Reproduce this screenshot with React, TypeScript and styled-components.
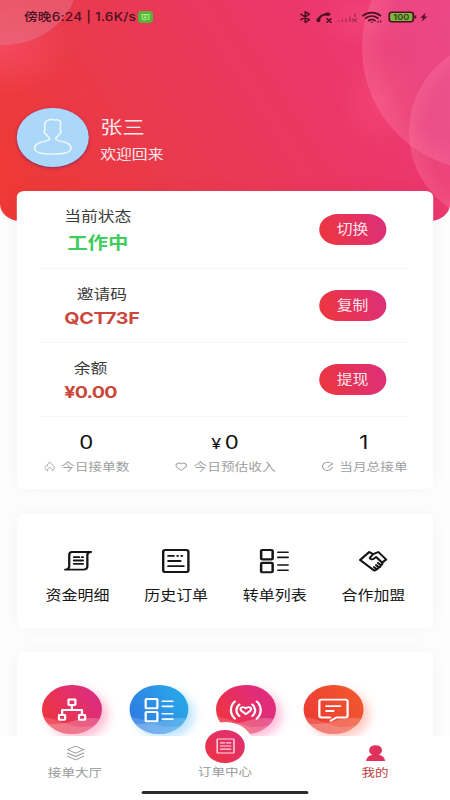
import React from 'react';
import styled, { createGlobalStyle } from 'styled-components';

const GlobalStyle = createGlobalStyle`
  * { box-sizing: border-box; }
  html, body { margin: 0; padding: 0; background: #fdfdfd; overflow: hidden; }
`;

const brand = 'linear-gradient(75deg, #ee363c, #dc2f7c)';

/* The layout is 375 units wide and is stretched to the 450px viewport. */
const Screen = styled.div`
  position: relative;
  width: 375px;
  height: 800px;
  display: grid;
  grid-template-rows: 736px 64px;
  transform: scaleX(1.2);
  transform-origin: 0 0;
  font-family: Inter, 'Noto Sans CJK SC', sans-serif;
  font-weight: 400;
  background: #fdfdfd;
  color: #333;
  overflow: hidden;
  white-space: nowrap;
`;

const Hero = styled.div`
  position: absolute;
  inset: 0 0 auto 0;
  height: 221px;
  border-radius: 0 0 17px 17px;
  overflow: hidden;
  background: linear-gradient(62deg, #ee3936 6%, #e93a4e 36%, #eb3766 66%, #ec397c 100%);
  svg { display: block; width: 100%; height: 100%; }
`;

const Content = styled.main`
  position: relative;
  display: flex;
  flex-direction: column;
  overflow: hidden;
`;

const StatusBar = styled.div`
  flex: none;
  height: 34px;
  padding: 0 18.5px 0 20px;
  display: flex;
  align-items: center;
  justify-content: space-between;
  color: #4d1023;
`;

const StatusGroup = styled.div<{ $gap: number }>`
  display: flex;
  align-items: center;
  gap: ${(p) => p.$gap}px;
  height: 16px;
  font-size: 11.4px;
  letter-spacing: 0.16px;
  font-weight: 500;
  line-height: 16px;
  svg { display: block; flex: none; letter-spacing: 0; }
`;

const Profile = styled.section`
  flex: none;
  height: 157px;
  padding: 74px 14px 0;
  display: flex;
  align-items: flex-start;
  gap: 10px;
  color: #fde8ec;
`;

const Avatar = styled.div`
  width: 59.5px;
  height: 58.5px;
  border-radius: 50%;
  background: #abd7fa;
  box-shadow: 0 1px 3px rgba(80, 40, 110, 0.65);
  svg { display: block; width: 100%; height: 100%; }
`;

const Greeting = styled.div`
  padding-top: 4.5px;
`;
const UserName = styled.div`
  font-size: 18.5px;
  line-height: 28px;
  font-weight: 400;
`;
const Welcome = styled.div`
  font-size: 13.2px;
  line-height: 26px;
  font-weight: 400;
`;

const Card = styled.section<{ $height: number; $gap?: number }>`
  flex: none;
  height: ${(p) => p.$height}px;
  margin: ${(p) => p.$gap ?? 0}px 14px 0;
  border-radius: 6px;
  background: #fff;
  box-shadow: 0 0 17px rgba(0, 0, 0, 0.04);
`;

const InfoRow = styled.div<{ $height: number }>`
  height: ${(p) => p.$height}px;
  margin: 0 21px 0 19px;
  padding: 0 18.5px 0 20.5px;
  border-bottom: 1px solid #f7f7f7;
  display: flex;
  align-items: center;
  justify-content: space-between;
`;

const InfoText = styled.div<{ $gap: number }>`
  display: flex;
  flex-direction: column;
  align-items: center;
  gap: ${(p) => p.$gap}px;
  line-height: 24px;
`;
const InfoLabel = styled.span`
  font-size: 14px;
  font-weight: 400;
  color: #3a3a3a;
`;
const InfoValue = styled.strong<{ $color: string; $size: number; $spacing: number }>`
  font-size: ${(p) => p.$size}px;
  font-weight: 700;
  letter-spacing: ${(p) => p.$spacing}px;
  color: ${(p) => p.$color};
`;

const PillButton = styled.button`
  width: 55.5px;
  height: 31px;
  padding: 0 0 2px;
  border: 0;
  border-radius: 16px;
  background: ${brand};
  color: #ffe4ea;
  font: inherit;
  font-size: 13.2px;
  font-weight: 400;
`;

const Stats = styled.div`
  display: grid;
  grid-template-columns: repeat(3, 1fr);
  padding-top: 13px;
`;
const Stat = styled.div`
  display: flex;
  flex-direction: column;
  align-items: center;
  gap: 2px;
`;
const StatNumber = styled.div`
  font-size: 18.5px;
  line-height: 24px;
  height: 24px;
  color: #111;
  small { font-size: 15px; margin-right: 3px; }
`;
const StatLabel = styled.div`
  display: flex;
  align-items: center;
  gap: 5px;
  height: 20px;
  padding-left: 1px;
  font-size: 11.4px;
  font-weight: 400;
  color: #a0a0a0;
`;

const QuickGrid = styled.div`
  display: grid;
  grid-template-columns: repeat(4, 82.2px);
  padding: 33px 0 0 9.5px;
`;
const QuickItem = styled.div`
  display: flex;
  flex-direction: column;
  align-items: center;
  gap: 10px;
  font-size: 13.3px;
  line-height: 20px;
  color: #151515;
`;

const BubbleGrid = styled.div`
  display: grid;
  grid-template-columns: repeat(4, 72.6px);
  justify-items: center;
  padding: 33px 0 0 9.7px;
`;
const Bubble = styled.div<{ $fill: string; $glow: string }>`
  width: 49.7px;
  height: 49px;
  border-radius: 50%;
  background: ${(p) => p.$fill};
  box-shadow: 5px 5px 9px ${(p) => p.$glow};
  overflow: hidden;
  svg { display: block; }
`;

const NavBar = styled.nav`
  position: relative;
  display: grid;
  grid-template-columns: repeat(3, 1fr);
  background: #fff;
`;
const NavItem = styled.div<{ $active?: boolean }>`
  display: flex;
  flex-direction: column;
  align-items: center;
  gap: 3px;
  padding-top: 8px;
  font-size: 11.3px;
  font-weight: 400;
  line-height: 16px;
  color: ${(p) => (p.$active ? '#c04040' : '#999')};
`;
const NavSpacer = styled.div`
  height: 17px;
`;
const NavBump = styled.div`
  position: absolute;
  top: -14px;
  left: calc(50% - 23px);
  width: 46px;
  height: 46px;
  padding-top: 8px;
  border-radius: 50%;
  background: #fff;
  display: flex;
  justify-content: center;
`;
const NavButton = styled.div`
  width: 32.5px;
  height: 32.5px;
  border-radius: 50%;
  background: linear-gradient(45deg, #ee3340, #dd3078);
  display: flex;
  align-items: center;
  justify-content: center;
`;
const HomeIndicator = styled.div`
  position: absolute;
  bottom: 6px;
  left: 118.3px;
  width: 139px;
  height: 3px;
  border-radius: 2px;
  background: #2c2c2e;
`;

const stroke = {
  fill: 'none',
  stroke: 'currentColor',
  strokeLinecap: 'round' as const,
  strokeLinejoin: 'round' as const,
};

const ChatBadge = () => (
  <svg width="12.5" height="12" viewBox="0 0 12 12" preserveAspectRatio="none">
    <rect width="12" height="12" rx="3.4" fill="#55b53a" />
    <path d="M3.3 3.5h5.4v4.6H6l-1.2 1v-1H3.3zM4.6 5h2.8M4.6 6.5h2.2" fill="none" stroke="#a9ee86" strokeWidth="0.9" />
  </svg>
);

const StatusIcons = () => (
  <svg width="107" height="16" viewBox="0 0 107 16">
    <g {...stroke} strokeWidth="1.4">
      <path d="M.8 5.2l7 5.5-3.4 2.7V2.6l3.4 2.7-7 5.5" />
      <path d="M15.4 11.4c.3-3.7 3.6-6.2 8.5-6.4" strokeWidth="2.2" />
      <path d="M15.4 11.6v-1.2M22.4 5.2h1.4" strokeWidth="3.2" />
      <path d="M22.4 9.8l3.5 3.5m0-3.5l-3.5 3.5" strokeWidth="1.3" />
    </g>
    <g stroke="currentColor" opacity=".42" strokeWidth="1.2">
      <path d="M32.2 13v-1.6M35.2 13v-2.4M38.4 13V9.4M41.6 13V7.4M45.8 8V4M43.2 9.5l4.2 3.6m0-3.6l-4.2 3.6" />
    </g>
    <g {...stroke} strokeWidth="1.6">
      <path d="M52.6 6.6c4.2-4 10.2-4 14.4 0M54.8 9.2c3-2.8 7-2.8 10 0M57.2 11.6c1.6-1.3 3.6-1.3 5.2 0M59.7 13.3h.1" />
      <path d="M65 11.9v1.6M67.2 11.6v1.6" strokeWidth=".9" />
    </g>
    <rect x="74.4" y="3.2" width="20" height="9.6" rx="2.3" fill="#7db443" stroke="currentColor" strokeWidth="1.4" />
    <path d="M96.1 6.5v3" stroke="currentColor" strokeWidth="1.5" />
    <text x="84.4" y="10.8" textAnchor="middle" fontSize="7.6" fontWeight="600" fill="#343c12">100</text>
    <path d="M105 3.8l-4.9 4.9h2.6l-1.4 4 4.9-5.3h-2.6z" fill="currentColor" />
  </svg>
);

const PersonOutline = () => (
  <svg viewBox="0 0 60 58" fill="none" stroke="#edf9f2" strokeWidth="1.4" strokeLinejoin="round">
    <path d="M23.5 14.8c1.7-3.3 5.1-4.2 8.3-3.1 1.7-.8 4.4-.1 5 1.8l-.3 8.2c1.2.5.7 3.8-.9 4-.4 1.8-1.5 3-2.8 3.6l.2 2.2c3.4 2.3 12.1 2 12.5 8.2.4 5.4-8.4 6.3-15.5 6.3s-15.3-.9-15-6.3c.3-6.2 9.1-5.7 12.3-8.2l.1-2.2c-1.6-.9-2.5-2.1-2.8-3.6-1.8-.4-2.2-3.4-.9-4z" />
  </svg>
);

const Flame = () => (
  <svg width="9" height="11" viewBox="0 0 9 11" {...stroke} strokeWidth=".8">
    <path d="M2.5 9.6C-.2 8.6-.1 5.7 1.5 4.5L2.3 5C2.2 3.2 3.5 1.6 4.9 1.3 4.8 3.4 8.4 4 8.3 7c-.1 1.4-.8 2.3-2 2.6C7 7.5 5.3 7.4 4.7 6.2 3.9 7.4 2 7.6 2.5 9.6z" />
  </svg>
);
const HeartOutline = () => (
  <svg width="10" height="11" viewBox="0 0 10 11" {...stroke} strokeWidth=".9">
    <path d="M5 9.5L1.3 6C-.6 3.8 2.6.4 5 3c2.4-2.6 5.6.8 3.7 3z" />
  </svg>
);
const Gauge = () => (
  <svg width="10" height="11" viewBox="0 0 10 11" {...stroke} strokeWidth=".9">
    <path d="M6.3 1.5A4.1 4.1 0 1 0 8.9 6.2M5.4 6l2.6-2.3M7.4 1.9l1.6.2-.3 1.6" />
  </svg>
);

const Scroll = () => (
  <svg width="28" height="28" viewBox="0 0 28 28" {...stroke} strokeWidth="1.9">
    <path d="M24.8 5H9C6.9 5 6.7 6.4 6.7 8.2v10.9c0 2.5-1.1 3.5-3.4 3.5h15.1c2.4 0 3.4-1.4 3.4-3.6V8c0-2 .7-3 3-3z" />
    <path d="M10.6 10.2h4.4m2.3 0h.8M10.6 13.5h7.5M10.6 16.8h7.5" strokeWidth="1.8" />
  </svg>
);
const Orders = () => (
  <svg width="28" height="28" viewBox="0 0 28 28" {...stroke} strokeWidth="2">
    <rect x="3" y="2.9" width="21" height="22.2" rx="1.8" />
    <path d="M7.2 8.9h4.6m3 0h.4m3 0h.6M7.2 14h10.2M7.2 19.2h12.8" strokeWidth="1.8" />
  </svg>
);
const ListBlocks = () => (
  <svg width="28" height="28" viewBox="0 0 28 28" {...stroke} strokeWidth="2.1">
    <rect x="2.6" y="3" width="9.6" height="9.4" rx="1" />
    <rect x="2.6" y="15.9" width="9.6" height="9.4" rx="1" />
    <path d="M16.6 5.3h8.4M16.6 10.4h8.4M16.6 18h8.4M16.6 23.2h8.4" strokeWidth="1.6" />
  </svg>
);
const Handshake = () => (
  <svg width="28" height="28" viewBox="0 0 28 28" {...stroke} strokeWidth="1.9">
    <path d="M14 7.2L10.7 5 3.1 13l11.4 10.2c1 .8 2.2-.1 2-1.4 1.2.5 2.3-.6 1.9-1.8 1.3.3 2.3-.9 1.7-2 1.2.1 2-1.3 1.2-2.3l3.5-3.2L18.3 5l-4.4 2.2-2.7 3.6c.4 1.8 2.3 2.1 3.5.7l1.8-1.4 5 5.5M16.5 21.8l-1.8-1.7M18.4 20l-2-1.9M20.1 18l-2.2-2.1" />
  </svg>
);

const BubbleWave = () => (
  <path d="M0 38C9 40 18 39 26 36c8-3 15-4 24-2v16H0z" fill="#fff" opacity=".22" />
);
const BubbleWaveBack = () => (
  <path d="M0 32c12 1 21 9 31 10 8 0 13-1 19-4v12H0z" fill="#fff" opacity=".16" />
);

const glyphs: Record<string, React.ReactNode> = {
  tree: (
    <g>
      <rect x="22.2" y="14.5" width="5.8" height="5.5" rx=".5" />
      <rect x="14.2" y="30" width="5.2" height="4.8" rx=".5" />
      <rect x="31" y="30" width="5.2" height="4.8" rx=".5" />
      <path d="M25.1 20v5M16.9 30v-5h16.6v5" />
    </g>
  ),
  list: (
    <g>
      <rect x="13.5" y="14" width="9.8" height="9.3" rx=".6" />
      <rect x="13.5" y="27" width="9.8" height="9.3" rx=".6" />
      <path d="M27.5 16.2h8.7M27.5 21.4h8.7M27.5 28.8h8.7M27.5 34.2h8.7" strokeWidth="1.6" />
    </g>
  ),
  signal: (
    <g>
      <path d="M25 29.2l-3.8-3.4c-2-2.6 1.3-5.2 3.8-2.4 2.5-2.8 5.8-.2 3.8 2.4z" />
      <path d="M15.8 16.4c-4.4 5-4.4 12.4 0 17.4M19.6 19.4c-3.3 3.4-3.3 8.5 0 11.7M34.2 16.4c4.4 5 4.4 12.4 0 17.4M30.4 19.4c3.3 3.4 3.3 8.5 0 11.7" />
    </g>
  ),
  message: (
    <g>
      <path d="M27.5 32.5h7.7c1.1 0 1.7-.5 1.7-1.6V16.3c0-1.1-.6-1.7-1.7-1.7H14.9c-1.1 0-1.7.6-1.7 1.7v14.6c0 1.1.6 1.6 1.7 1.6h7.4M27.5 32.5l-4.8 3.3" />
      <path d="M19 21.1h11.8M19 26h6" />
    </g>
  ),
};

const bubbles = [
  { icon: 'tree', fill: 'linear-gradient(60deg, #ee3440 15%, #dd2e7b 80%)', glow: 'rgba(255, 65, 125, .33)' },
  { icon: 'list', fill: 'linear-gradient(65deg, #2f7be4 10%, #29a3e8 80%)', glow: 'rgba(60, 175, 255, .33)' },
  { icon: 'signal', fill: 'linear-gradient(60deg, #ee3440 15%, #e12c79 70%)', glow: 'rgba(255, 65, 150, .33)' },
  { icon: 'message', fill: 'linear-gradient(60deg, #ed3b34 15%, #f1562e 85%)', glow: 'rgba(255, 95, 75, .33)' },
];

const infoRows = [
  { label: '当前状态', value: '工作中', color: '#3fce5c', size: 17, spacing: 0, action: '切换', height: 78, gap: 3 },
  { label: '邀请码', value: 'QCT73F', color: '#cc473b', size: 16.4, spacing: -0.2, action: '复制', height: 74, gap: 0 },
  { label: '余额', value: '¥0.00', color: '#cc473b', size: 16.4, spacing: -0.65, action: '提现', height: 74, gap: 0 },
];

const quickItems = [
  { label: '资金明细', icon: <Scroll /> },
  { label: '历史订单', icon: <Orders /> },
  { label: '转单列表', icon: <ListBlocks /> },
  { label: '合作加盟', icon: <Handshake /> },
];

const Layers = () => (
  <svg width="18" height="18" viewBox="0 0 18 18" {...stroke} strokeWidth=".9">
    <path d="M9 2.2l6.8 3.5L9 9.2 2.2 5.7zM2.2 9L9 12.5 15.8 9M2.2 12.2L9 15.8l6.8-3.6" />
  </svg>
);
const PersonSolid = () => (
  <svg width="18" height="18" viewBox="0 0 18 18">
    <path d="M6.4 11.1C1.7 8 3.3 1.2 9 1.2s7.3 6.8 2.6 9.9c3.2.4 4.9 2.3 5.3 5.9H1.1c.4-3.6 2.1-5.5 5.3-5.9z" fill="#df3159" />
  </svg>
);

export default function App() {
  return (
    <>
      <GlobalStyle />
      <Screen>
        <Hero>
          <svg viewBox="0 0 450 221" preserveAspectRatio="none">
            <defs>
              <radialGradient id="ring">
                <stop offset="0" stopColor="#e886bd" stopOpacity=".2" />
                <stop offset=".8" stopColor="#ed85b8" stopOpacity=".16" />
                <stop offset="1" stopColor="#ff83a9" stopOpacity=".32" />
              </radialGradient>
              <radialGradient id="glow">
                <stop offset="0" stopColor="#ff6087" stopOpacity=".6" />
                <stop offset="1" stopColor="#ff6087" stopOpacity="0" />
              </radialGradient>
            </defs>
            <ellipse cx="5" cy="45" rx="65" ry="50" fill="url(#glow)" opacity=".7" />
            <ellipse cx="2" cy="-18" rx="75" ry="63" fill="#e5829a" opacity=".4" />
            <ellipse cx="362" cy="18" rx="48" ry="30" fill="url(#glow)" opacity=".45" />
            <ellipse cx="381" cy="100" rx="44" ry="50" fill="url(#glow)" opacity=".5" />
            <circle cx="484" cy="48" r="122" fill="url(#ring)" />
            <circle cx="501" cy="132" r="92" fill="url(#ring)" />
          </svg>
        </Hero>
        <Content>
          <StatusBar>
            <StatusGroup $gap={2}>
              <span>傍晚6:24 | 1.6K/s</span>
              <ChatBadge />
            </StatusGroup>
            <StatusGroup $gap={0}>
              <StatusIcons />
            </StatusGroup>
          </StatusBar>
          <Profile>
            <Avatar>
              <PersonOutline />
            </Avatar>
            <Greeting>
              <UserName>张三</UserName>
              <Welcome>欢迎回来</Welcome>
            </Greeting>
          </Profile>
          <Card $height={298}>
            {infoRows.map((r) => (
              <InfoRow key={r.label} $height={r.height}>
                <InfoText $gap={r.gap}>
                  <InfoLabel>{r.label}</InfoLabel>
                  <InfoValue $color={r.color} $size={r.size} $spacing={r.spacing}>{r.value}</InfoValue>
                </InfoText>
                <PillButton>{r.action}</PillButton>
              </InfoRow>
            ))}
            <Stats>
              <Stat>
                <StatNumber>0</StatNumber>
                <StatLabel><Flame />今日接单数</StatLabel>
              </Stat>
              <Stat>
                <StatNumber><small>¥</small>0</StatNumber>
                <StatLabel><HeartOutline />今日预估收入</StatLabel>
              </Stat>
              <Stat>
                <StatNumber>1</StatNumber>
                <StatLabel><Gauge />当月总接单</StatLabel>
              </Stat>
            </Stats>
          </Card>
          <Card $height={114} $gap={25}>
            <QuickGrid>
              {quickItems.map((q) => (
                <QuickItem key={q.label}>
                  {q.icon}
                  <span>{q.label}</span>
                </QuickItem>
              ))}
            </QuickGrid>
          </Card>
          <Card $height={120} $gap={24}>
            <BubbleGrid>
              {bubbles.map((b) => (
                <Bubble key={b.icon} $fill={b.fill} $glow={b.glow}>
                  <svg width="49.7" height="49" viewBox="0 0 50 49">
                    <BubbleWaveBack />
                    <BubbleWave />
                    <g fill="none" stroke="#fff" strokeWidth="1.9" strokeLinecap="round" strokeLinejoin="round">
                      {glyphs[b.icon]}
                    </g>
                  </svg>
                </Bubble>
              ))}
            </BubbleGrid>
          </Card>
        </Content>
        <NavBar>
          <NavBump>
            <NavButton>
              <svg width="18" height="18" viewBox="0 0 18 18" {...stroke} stroke="#ffdce4" strokeWidth="1.2">
                <rect x="2" y="2" width="14" height="14" rx=".6" />
                <path d="M4.8 5.8h3.4m1.7 0h3.4M4.8 9h8.4M4.8 12.2h8.4" />
              </svg>
            </NavButton>
          </NavBump>
          <NavItem>
            <Layers />
            <span>接单大厅</span>
          </NavItem>
          <NavItem>
            <NavSpacer />
            <span>订单中心</span>
          </NavItem>
          <NavItem $active>
            <PersonSolid />
            <span>我的</span>
          </NavItem>
          <HomeIndicator />
        </NavBar>
      </Screen>
    </>
  );
}
